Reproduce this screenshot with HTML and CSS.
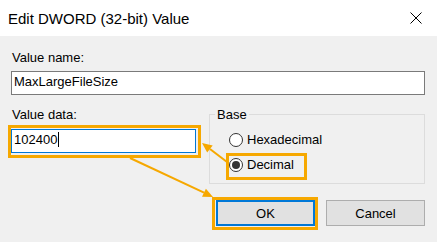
FILE: index.html
```html
<!DOCTYPE html>
<html lang="en">
<head>
    <meta charset="UTF-8">
    <title>Edit DWORD (32-bit) Value</title>
    <link rel="stylesheet" href="styles.css">
</head>
<body>
    <div class="dialog">
        <div class="titlebar">
            <span class="title">Edit DWORD (32-bit) Value</span>
            <svg class="close" width="12" height="12" viewBox="0 0 12 12">
                <path d="M0.5 0.5 L11.5 11.5 M11.5 0.5 L0.5 11.5" stroke="#000" stroke-width="1" fill="none"/>
            </svg>
        </div>
        <div class="content">
            <div class="label">Value name:</div>
            <div class="textbox">MaxLargeFileSize</div>
            <div class="row">
                <div class="data-col">
                    <div class="label">Value data:</div>
                    <div class="textbox focused">102400<span class="caret"></span></div>
                </div>
                <fieldset class="base">
                    <legend>Base</legend>
                    <div class="radio"><span class="circle"></span>Hexadecimal</div>
                    <div class="radio checked"><span class="circle"></span>Decimal</div>
                </fieldset>
            </div>
            <div class="buttons">
                <div class="btn default">OK</div>
                <div class="btn">Cancel</div>
            </div>
        </div>
        <!-- annotation layer -->
        <svg class="marks" width="437" height="242" viewBox="0 0 437 242">
            <g fill="none" stroke="#f6a800" stroke-width="3">
                <rect x="9.5" y="126.5" width="190" height="30"/>
                <rect x="227.5" y="154.5" width="78" height="24"/>
                <rect x="213.5" y="198.5" width="103" height="30"/>
            </g>
            <g stroke="#f6a800" stroke-width="2">
                <line x1="227" y1="162" x2="210" y2="149"/>
                <line x1="130" y1="158" x2="204" y2="192.7"/>
            </g>
            <g fill="#f6a800">
                <polygon points="202,143 212.7,145.5 207.2,152.6"/>
                <polygon points="213,197 202,196.8 205.9,188.7"/>
            </g>
        </svg>
    </div>
</body>
</html>
```

FILE: styles.css
```css
body {
    margin: 0;
    font-family: 'Liberation Sans', Arial, sans-serif;
    font-size: 13px;
    color: #000;
}
.dialog {
    position: relative;
    width: 437px;
    height: 242px;
    background: #f0f0f0;
    overflow: hidden;
}
.titlebar {
    height: 36px;
    background: #fff;
    display: flex;
    align-items: center;
    justify-content: space-between;
    padding: 1px 15px 0 8px;
    box-sizing: border-box;
}
.title {
    font-size: 15px;
    line-height: 17px;
}
.close {
    display: block;
    margin-top: -1px;
}
.content {
    padding: 14px 12px 0 11px;
}
.label {
    line-height: 15px;
    padding-left: 1px;
}
.textbox {
    margin-top: 6px;
    height: 24px;
    box-sizing: border-box;
    background: #fff;
    border: 1px solid #7a7a7a;
    padding: 2px 0 0 2px;
    line-height: 16px;
}
.textbox.focused {
    margin-top: 7px;
    border-color: #0078d7;
}
.caret {
    display: inline-block;
    width: 1px;
    height: 15px;
    background: #000;
    vertical-align: -3px;
    margin-left: 1px;
}
.row {
    display: flex;
    margin-top: 12px;
}
.data-col {
    width: 185px;
}
.base {
    margin: 0 0 0 13px;
    flex: 1;
    border: 1px solid #dcdcdc;
    padding: 0 0 11px 5px;
}
.base legend {
    padding: 0 2px;
    line-height: 15px;
}
.radio {
    display: flex;
    align-items: center;
    line-height: 15px;
    margin: 10px 0 0 14px;
}
.circle {
    width: 14px;
    height: 14px;
    box-sizing: border-box;
    border: 1px solid #333;
    border-radius: 50%;
    background: #fff;
    margin-right: 4px;
    display: flex;
    align-items: center;
    justify-content: center;
}
.radio.checked .circle::after {
    content: '';
    width: 8px;
    height: 8px;
    border-radius: 50%;
    background: #333;
}
.buttons {
    display: flex;
    justify-content: flex-end;
    gap: 11px;
    margin-top: 16px;
}
.btn {
    width: 99px;
    height: 26px;
    box-sizing: border-box;
    background: #e1e1e1;
    border: 1px solid #adadad;
    display: flex;
    align-items: center;
    justify-content: center;
    line-height: 15px;
}
.btn.default {
    border: 2px solid #0078d7;
}
.marks {
    position: absolute;
    left: 0;
    top: 0;
    pointer-events: none;
}
```
